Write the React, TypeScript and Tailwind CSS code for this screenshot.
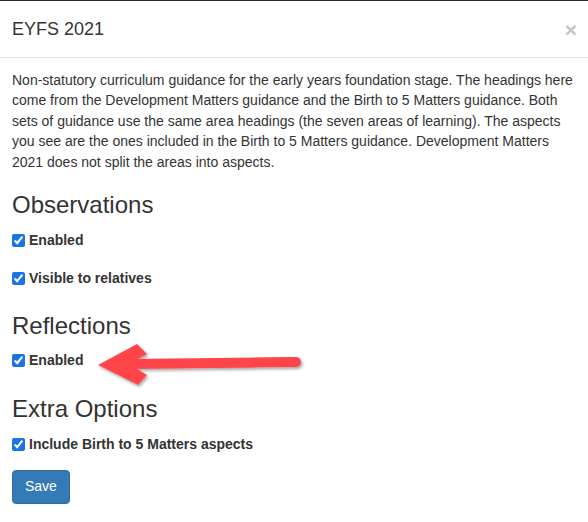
const sections = [
  { title: "Observations", items: ["Enabled", "Visible to relatives"] },
  { title: "Reflections", items: ["Enabled"] },
  { title: "Extra Options", items: ["Include Birth to 5 Matters aspects"] },
]

const Check = ({ label, className }: { label: string; className?: string }) => (
  <label className={`flex items-center h-5 text-[14px] font-bold ${className ?? ""}`}>
    <input type="checkbox" defaultChecked className="m-0 mr-1 w-[13px] h-[13px] accent-[#1a73e8]" />
    {label}
  </label>
)

const Arrow = () => (
  <svg className="absolute left-0 top-0 pointer-events-none" width="588" height="522">
    <defs>
      <filter id="sh" x="-20%" y="-50%" width="140%" height="200%">
        <feDropShadow dx="1.5" dy="2" stdDeviation="1.8" floodColor="#000" floodOpacity="0.35" />
      </filter>
    </defs>
    <g filter="url(#sh)" fill="#ff4448" stroke="#ff4448">
      <line x1="128" y1="364" x2="296" y2="362" strokeWidth="10" strokeLinecap="round" />
      <polygon points="98,365 137,344 147,354 129,364 147,375 138,385" stroke="none" />
    </g>
  </svg>
)

export default function App() {
  return (
    <div className="relative w-[588px] h-[522px] bg-white text-[#333] font-['Liberation_Sans',Arial,sans-serif] overflow-hidden">
      <div className="h-px bg-[#1c2b3b]" />
      <div className="flex items-center justify-between px-3 pt-[16px] pb-[14px] border-b border-[#e5e5e5]">
        <h4 className="text-[18px] leading-[25.7px]">EYFS 2021</h4>
        <span className="text-[21px] font-bold leading-none text-[#c4c4c4] mr-[-1px]">×</span>
      </div>
      <div className="px-3 pt-[12px]">
        <p className="text-[14px] leading-[20.6px]">
          Non-statutory curriculum guidance for the early years foundation stage. The headings here come from the
          Development Matters guidance and the Birth to 5 Matters guidance. Both sets of guidance use the same area
          headings (the seven areas of learning). The aspects you see are the ones included in the Birth to 5 Matters
          guidance. Development Matters 2021 does not split the areas into aspects.
        </p>

        <h3 className="mt-[19px] text-[24px] leading-[26.4px]">{sections[0].title}</h3>
        <Check label={sections[0].items[0]} className="mt-[12px]" />
        <Check label={sections[0].items[1]} className="mt-[18px]" />

        <h3 className="mt-[25px] text-[24px] leading-[26.4px]">{sections[1].title}</h3>
        <Check label={sections[1].items[0]} className="mt-[11px]" />

        <h3 className="mt-[26px] text-[24px] leading-[26.4px]">{sections[2].title}</h3>
        <Check label={sections[2].items[0]} className="mt-[12px]" />

        <button className="mt-[15px] h-[34px] px-3 bg-[#337ab7] border border-[#2e6da4] rounded text-white text-[14px]">
          Save
        </button>
      </div>
      <Arrow />
    </div>
  )
}
